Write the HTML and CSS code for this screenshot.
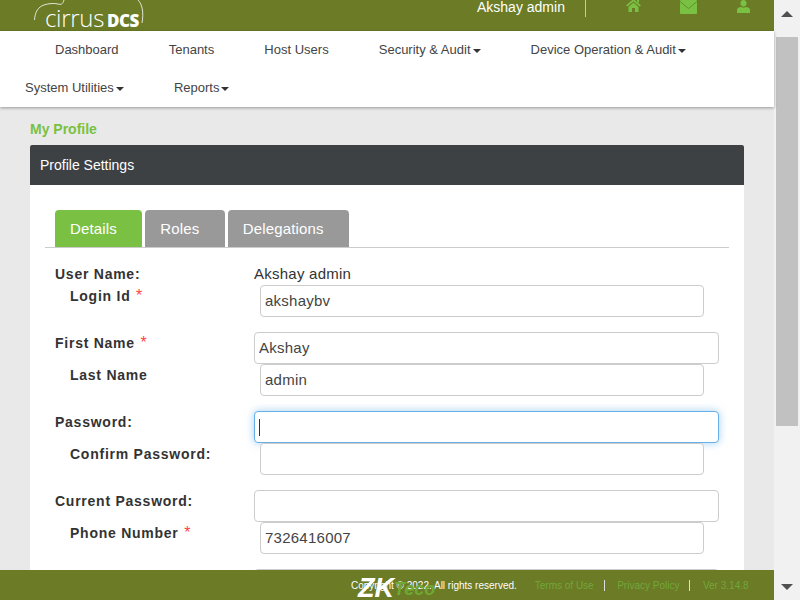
FILE: index.html
```html
<!DOCTYPE html>
<html lang="en">

<head>
    <meta charset="UTF-8">
    <meta name="viewport" content="width=device-width, initial-scale=1.0">
    <title>My Profile</title>
    <link rel="stylesheet" href="styles.css">
</head>

<body>
    <div class="app">
        <div class="main">
            <header class="topbar">
                <div class="logo">
                    <svg class="logo-arc" width="112" height="31" viewBox="0 0 112 31">
                        <path d="M0.5 20 C1 12 4 7 10 5 C14 3.5 20 3 24 4 C27 5 29 4 30 0" fill="none" stroke="#fff" stroke-width="0.8" />
                        <path d="M104 0 C108 4 110 12 108 23" fill="none" stroke="#fff" stroke-width="0.8" />
                    </svg>
                    <span class="logo-name">cirrus</span><span class="logo-dcs">DCS</span>
                </div>
                <div class="top-user">Akshay admin</div>
                <div class="top-icons">
                    <svg class="home-icon" width="15" height="13" viewBox="0 0 15 13">
                        <path d="M7.5 0 L15 6.5 L13.6 7.5 L7.5 2.2 L1.4 7.5 L0 6.5 Z M11 0.5 H13 V4 L11 2.2 Z M2.5 8 L7.5 3.6 L12.5 8 V13 H9 V9 H6 V13 H2.5 Z" fill="#7ac143" />
                    </svg>
                    <svg class="mail-icon" width="17" height="14" viewBox="0 0 17 14">
                        <rect width="17" height="14" rx="1" fill="#7ac143" />
                        <path d="M0 1.5 L8.5 8.5 L17 1.5" fill="none" stroke="#5f8a2c" stroke-width="0.9" />
                    </svg>
                    <svg class="user-icon" width="13" height="13" viewBox="0 0 13 13">
                        <path d="M6.5 0 C8.6 0 9.6 1.5 9.6 3.2 C9.6 5 8.6 6.6 6.5 6.6 C4.4 6.6 3.4 5 3.4 3.2 C3.4 1.5 4.4 0 6.5 0 Z M0 10 C0 8 1.8 7.4 4 7 C5.4 7.8 7.6 7.8 9 7 C11.2 7.4 13 8 13 10 V13 H0 Z" fill="#7ac143" />
                    </svg>
                </div>
            </header>

            <nav class="menu">
                <div class="menu-row first">
                    <a>Dashboard</a>
                    <a>Tenants</a>
                    <a>Host Users</a>
                    <a class="drop">Security &amp; Audit</a>
                    <a class="drop">Device Operation &amp; Audit</a>
                </div>
                <div class="menu-row second">
                    <a class="drop">System Utilities</a>
                    <a class="drop">Reports</a>
                </div>
            </nav>

            <main class="content">
                <h1 class="page-title">My Profile</h1>
                <section class="panel">
                    <h2 class="panel-head">Profile Settings</h2>
                    <div class="panel-body">
                        <div class="tabs">
                            <a class="tab active">Details</a>
                            <a class="tab">Roles</a>
                            <a class="tab">Delegations</a>
                        </div>
                        <form class="profile-form">
                            <div class="group">
                                <div class="row plain">
                                    <label>User Name:</label>
                                    <span class="value">Akshay admin</span>
                                </div>
                                <div class="row sub">
                                    <label>Login Id <i>*</i></label>
                                    <input type="text" value="akshaybv">
                                </div>
                            </div>
                            <div class="group">
                                <div class="row">
                                    <label>First Name <i>*</i></label>
                                    <input type="text" value="Akshay">
                                </div>
                                <div class="row sub">
                                    <label>Last Name</label>
                                    <input type="text" value="admin">
                                </div>
                            </div>
                            <div class="group">
                                <div class="row">
                                    <label>Password:</label>
                                    <input type="password" autofocus>
                                </div>
                                <div class="row sub">
                                    <label>Confirm Password:</label>
                                    <input type="password">
                                </div>
                            </div>
                            <div class="group">
                                <div class="row">
                                    <label>Current Password:</label>
                                    <input type="password">
                                </div>
                                <div class="row sub">
                                    <label>Phone Number <i>*</i></label>
                                    <input type="text" value="7326416007">
                                </div>
                            </div>
                            <div class="group">
                                <div class="row">
                                    <label></label>
                                    <input type="text">
                                </div>
                            </div>
                        </form>
                    </div>
                </section>
            </main>

            <footer class="footer">
                <span class="copyright">Copyright &copy; 2022. All rights reserved.</span>
                <span class="zk-logo">ZK<b>Teco</b></span>
                <a class="foot-link">Terms of Use</a>
                <a class="foot-link">Privacy Policy</a>
                <a class="foot-link last">Ver 3.14.8</a>
            </footer>
        </div>

        <div class="scrollbar">
            <span class="arrow up"></span>
            <div class="track">
                <div class="thumb"></div>
            </div>
            <span class="arrow down"></span>
        </div>
    </div>
</body>

</html>
```

FILE: styles.css
```css
* {
    box-sizing: border-box;
}

html,
body {
    margin: 0;
    height: 100%;
    overflow: hidden;
}

body {
    font-family: "Liberation Sans", Arial, sans-serif;
    font-size: 14px;
    color: #333;
    background-color: #e9e9e9;
}

.app {
    display: flex;
    height: 600px;
}

.main {
    flex: 1;
    min-width: 0;
    display: flex;
    flex-direction: column;
}

/* top green bar */
.topbar {
    height: 31px;
    flex: none;
    display: flex;
    background-color: #6b7b26;
    color: white;
}

.logo {
    position: relative;
    margin-left: 34px;
    width: 112px;
    height: 31px;
    padding: 5px 0 0 11px;
    font-family: "Open Sans", sans-serif;
    font-size: 24px;
    line-height: 26px;
    white-space: nowrap;
}

.logo-arc {
    position: absolute;
    left: 0;
    top: 0;
}

.logo-name {
    font-weight: 300;
    letter-spacing: -0.3px;
}

.logo-dcs {
    font-weight: 800;
    font-size: 17px;
    letter-spacing: -0.5px;
    margin-left: 3px;
}

.top-user {
    margin-left: 331px;
    width: 109px;
    height: 17px;
    border-right: 1px solid #c5cca5;
    font-size: 14px;
    line-height: 14px;
}

.top-icons {
    display: flex;
    align-items: flex-start;
    padding-left: 40px;
}

.home-icon {
    margin-right: 39px;
    margin-top: -1px;
}

.mail-icon {
    margin-right: 40px;
}

/* nav */
.menu {
    height: 76px;
    flex: none;
    background: white;
    box-shadow: 0 1px 3px rgba(0, 0, 0, 0.35);
    position: relative;
    font-size: 13px;
    color: #444;
}

.menu-row {
    height: 38px;
    display: flex;
    align-items: center;
    gap: 50.1px;
    padding-bottom: 1px;
}

.menu-row.first {
    padding-left: 55px;
}

.menu-row.second {
    padding-left: 25px;
}

.drop::after {
    content: "";
    display: inline-block;
    margin-left: 2px;
    vertical-align: middle;
    border-top: 4px solid #333;
    border-left: 4px solid transparent;
    border-right: 4px solid transparent;
}

/* page */
.content {
    flex: 1;
    min-height: 0;
    overflow: hidden;
    padding: 14px 30px 0;
}

.page-title {
    margin: 0 0 8px;
    font-size: 14px;
    line-height: 16px;
    color: #7ac143;
}

.panel {
    background: white;
}

.panel-head {
    margin: 0;
    height: 40px;
    padding: 0 10px;
    font-size: 14px;
    font-weight: normal;
    line-height: 40px;
    color: white;
    background-color: #3e4144;
    border-radius: 2px 2px 0 0;
}

.panel-body {
    padding: 25px 15px 0;
}

.tabs {
    display: flex;
    gap: 3px;
    padding-left: 10px;
    border-bottom: 1px solid #ccc;
}

.tab {
    height: 37px;
    padding: 0 25.4px 0 15px;
    font-size: 15px;
    letter-spacing: 0.15px;
    line-height: 37px;
    color: white;
    background-color: #999;
    border-radius: 4px 4px 0 0;
}

.tab.active {
    background-color: #7ac143;
}

.profile-form {
    padding: 17px 10px 0;
}

.group {
    margin-bottom: 15px;
}

.row {
    display: flex;
    align-items: flex-start;
    height: 32px;
}

.row.plain {
    height: 20px;
}

.row.sub {
    padding: 0 15px;
}

.row label {
    width: 199px;
    flex: none;
    padding-top: 1px;
    font-weight: bold;
    letter-spacing: 0.75px;
    line-height: 20px;
}

.row.plain label {
    padding-top: 0;
    line-height: 18px;
}

.row.sub label {
    width: 190px;
}

.row i {
    margin-left: 1px;
    font-size: 16px;
    font-style: normal;
    font-weight: normal;
    color: #f44;
}

.value {
    font-size: 15px;
    letter-spacing: 0.25px;
    line-height: 18px;
}

.row input {
    flex: 1;
    min-width: 0;
    height: 32px;
    padding: 0 4px 2px;
    font-family: "Liberation Sans", Arial, sans-serif;
    font-size: 15px;
    letter-spacing: 0.25px;
    color: #444;
    background: white;
    border: 1px solid #ccc;
    border-radius: 4px;
    outline: none;
}

/* caret is painted so it shows in a still picture */
.row input:focus {
    border-color: #66afe9;
    box-shadow: 0 0 8px rgba(102, 175, 233, 0.6);
    background: linear-gradient(#333, #333) no-repeat 4px center / 1px 17px, white;
}

/* footer */
.footer {
    position: relative;
    height: 30px;
    flex: none;
    display: flex;
    align-items: center;
    padding-left: 351px;
    font-size: 10px;
    white-space: nowrap;
    background-color: #6b7b26;
}

.copyright {
    color: white;
    margin-right: 18px;
}

.zk-logo {
    position: absolute;
    left: 358px;
    top: 7px;
    height: 23px;
    font-size: 27px;
    font-style: italic;
    font-weight: bold;
    line-height: 23px;
    color: white;
}

.zk-logo b {
    font-size: 18px;
    vertical-align: 2px;
    color: #6fa832;
}

.foot-link {
    color: #72a73a;
    padding-right: 10px;
    margin-right: 12.5px;
    border-right: 1px solid #ddd;
}

.foot-link.last {
    border-right: none;
    padding-right: 0;
    margin-right: 0;
}

/* scrollbar */
.scrollbar {
    width: 26px;
    flex: none;
    display: flex;
    flex-direction: column;
    align-items: center;
    background-color: #f1f1f1;
}

.arrow {
    flex: none;
    width: 0;
    height: 0;
    border-left: 6px solid transparent;
    border-right: 6px solid transparent;
}

.arrow.up {
    margin: 11px 0 20px;
    border-bottom: 6px solid #505050;
}

.arrow.down {
    margin: 20px 0 10px;
    border-top: 6px solid #505050;
}

.track {
    flex: 1;
    width: 100%;
    padding: 0 2px;
}

.thumb {
    height: 389px;
    background-color: #c1c1c1;
}
```
